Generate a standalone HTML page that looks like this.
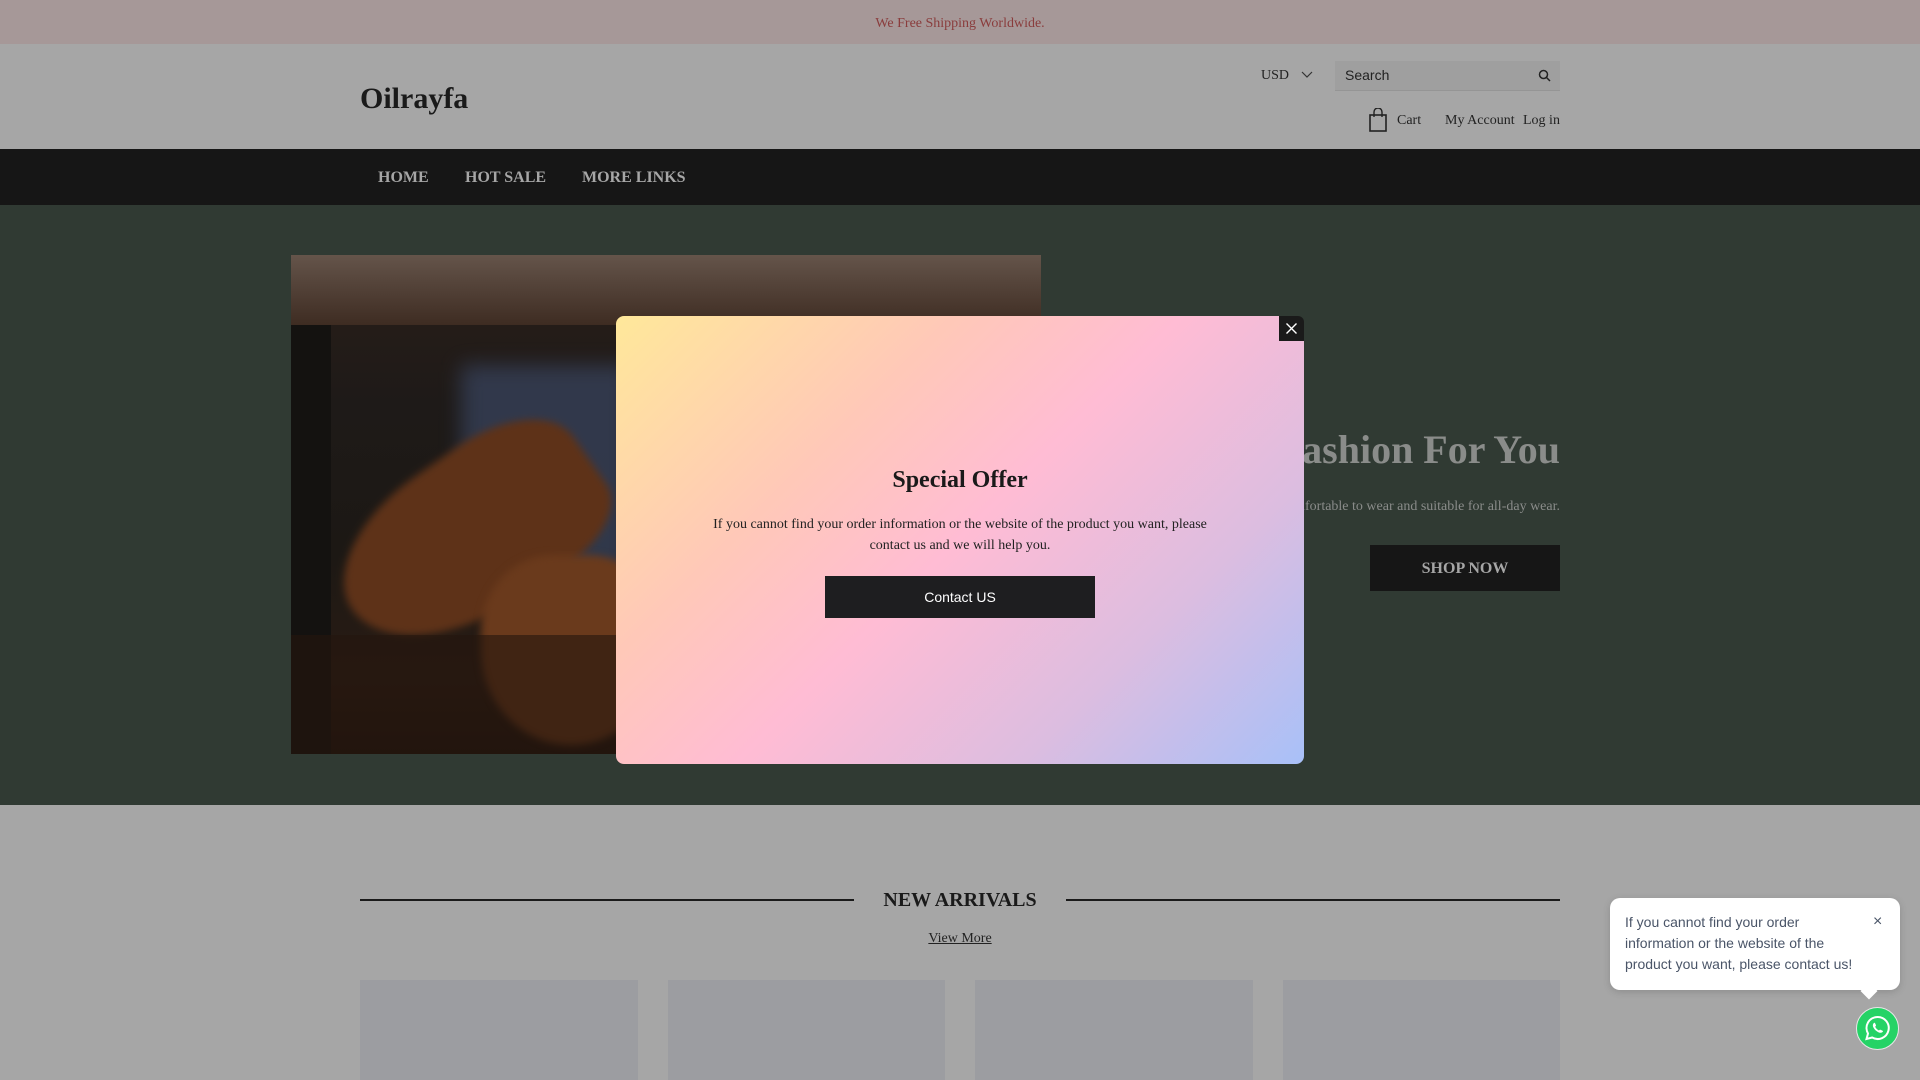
<!DOCTYPE html>
<html><head><meta charset="utf-8"><style>
*{margin:0;padding:0;box-sizing:border-box}
body{width:1920px;height:1080px;overflow:hidden;background:#a6a6a6;font-family:"Liberation Serif",serif;position:relative}
.abs{position:absolute}
</style></head><body>
<div class="abs" style="left:0;top:0;width:1920px;height:44px;background:#a69898;text-align:center;line-height:47px;font-size:14px;color:#8a3c3c">We Free Shipping Worldwide.</div>
<div class="abs" style="left:0;top:44px;width:1920px;height:105px;background:#a6a6a6"></div>
<div class="abs" style="left:360px;top:82px;font-size:30px;font-weight:bold;color:#1a1a1a">Oilrayfa</div>
<div class="abs" style="left:1261px;top:68px;font-size:14px;color:#222">USD <svg width="12" height="8" style="margin-left:8px" viewBox="0 0 12 8"><path d="M1 1l5 5 5-5" fill="none" stroke="#333" stroke-width="1.2"/></svg></div>
<div class="abs" style="left:1335px;top:61px;width:225px;height:30px;background:#9f9f9f;border-bottom:1px solid #959595"></div>
<div class="abs" style="left:1345px;top:67px;font-family:'Liberation Sans',sans-serif;font-size:14px;color:#222">Search</div>
<svg class="abs" style="left:1538px;top:69px" width="13" height="13" viewBox="0 0 13 13"><circle cx="5.5" cy="5.5" r="4" fill="none" stroke="#222" stroke-width="1.5"/><path d="M8.5 8.5l3.5 3.5" stroke="#222" stroke-width="1.5"/></svg>
<svg class="abs" style="left:1368px;top:108px" width="20" height="24" viewBox="0 0 20 24"><rect x="2" y="7" width="16" height="16" fill="none" stroke="#222" stroke-width="1.6"/><path d="M6 9V4a4 4 0 0 1 8 0v5" fill="none" stroke="#222" stroke-width="1.4"/></svg>
<div class="abs" style="left:1397px;top:113px;font-size:14px;color:#222">Cart</div>
<div class="abs" style="left:1445px;top:113px;font-size:14px;color:#222">My Account</div>
<div class="abs" style="left:1523px;top:113px;font-size:14px;color:#222">Log in</div>
<div class="abs" style="left:0;top:149px;width:1920px;height:56px;background:#161616"></div>
<div class="abs" style="left:378px;top:169px;font-size:16px;font-weight:bold;color:#a6a6a6">HOME</div>
<div class="abs" style="left:465px;top:169px;font-size:16px;font-weight:bold;color:#a6a6a6">HOT SALE</div>
<div class="abs" style="left:582px;top:169px;font-size:16px;font-weight:bold;color:#a6a6a6">MORE LINKS</div>
<div class="abs" style="left:0;top:205px;width:1920px;height:600px;background:#303a33"></div>
<div class="abs" style="left:291px;top:255px;width:750px;height:499px;overflow:hidden;background:linear-gradient(180deg,#2a1e18 0%,#1e1a18 30%,#1c1814 60%,#2a1c14 85%,#20140e 100%)">
 <div class="abs" style="left:-10px;top:-10px;width:770px;height:80px;background:linear-gradient(180deg,#6a5a50,#3e2c22)"></div>
 <div class="abs" style="left:0;top:70px;width:40px;height:430px;background:#141210"></div>
 <div class="abs" style="left:170px;top:110px;width:170px;height:230px;background:#364058;filter:blur(10px);opacity:.8"></div>
 <div class="abs" style="left:40px;top:200px;width:280px;height:160px;background:#5e3218;border-radius:50% 40% 30% 60%;transform:rotate(-35deg);filter:blur(4px)"></div>
 <div class="abs" style="left:190px;top:300px;width:180px;height:190px;background:#6a3a1c;border-radius:40% 40% 50% 50%;filter:blur(4px)"></div>
 <div class="abs" style="left:0;top:380px;width:750px;height:120px;background:#24160e;opacity:.6"></div>
</div>
<div class="abs" style="right:360px;top:426px;font-size:40px;font-weight:bold;color:#8a8c8a">Fashion For You</div>
<div class="abs" style="right:360px;top:499px;font-size:14px;color:#8a8c8a">Comfortable to wear and suitable for all-day wear.</div>
<div class="abs" style="left:1370px;top:545px;width:190px;height:46px;background:#161616;color:#a6a6a6;font-size:16px;font-weight:bold;text-align:center;line-height:48px">SHOP NOW</div>
<div class="abs" style="left:360px;top:899px;width:494px;height:2px;background:#1a1a1a"></div>
<div class="abs" style="left:1066px;top:899px;width:494px;height:2px;background:#1a1a1a"></div>
<div class="abs" style="left:0;top:889px;width:1920px;text-align:center;font-size:20px;font-weight:bold;color:#1a1a1a">NEW ARRIVALS</div>
<div class="abs" style="left:0;top:931px;width:1920px;text-align:center;font-size:14px;color:#222;text-decoration:underline">View More</div>
<div class="abs" style="left:360px;top:980px;width:278px;height:100px;background:#9c9da1"></div>
<div class="abs" style="left:668px;top:980px;width:277px;height:100px;background:#9c9da1"></div>
<div class="abs" style="left:975px;top:980px;width:278px;height:100px;background:#9c9da1"></div>
<div class="abs" style="left:1283px;top:980px;width:277px;height:100px;background:#9c9da1"></div>
<div class="abs" style="left:616px;top:316px;width:688px;height:448px;border-radius:8px;background:linear-gradient(135deg,#ffe89a 0%,#ffc8b8 30%,#ffbcd4 50%,#dcbde0 75%,#a8c0f8 100%)"></div>
<div class="abs" style="left:1279px;top:316px;width:25px;height:25px;background:#1a1a1a;border-top-right-radius:6px"><svg width="25" height="25" viewBox="0 0 25 25"><path d="M7.5 7.5l10 10M17.5 7.5l-10 10" stroke="#fff" stroke-width="1.4"/></svg></div>
<div class="abs" style="left:616px;top:467px;width:688px;text-align:center;font-size:24px;font-weight:bold;color:#1a1a1a">Special Offer</div>
<div class="abs" style="left:700px;top:514px;width:520px;text-align:center;font-size:14px;line-height:21px;color:#222">If you cannot find your order information or the website of the product you want, please contact us and we will help you.</div>
<div class="abs" style="left:825px;top:576px;width:270px;height:42px;background:#1e1e20;color:#fff;font-family:'Liberation Sans',sans-serif;font-size:14px;text-align:center;line-height:42px">Contact US</div>
<div class="abs" style="left:1610px;top:898px;width:290px;height:92px;background:#fff;border-radius:10px;box-shadow:0 2px 8px rgba(0,0,0,.15)"></div>
<div class="abs" style="left:1863px;top:985px;width:12px;height:12px;background:#fff;transform:rotate(45deg)"></div>
<div class="abs" style="left:1625px;top:912px;width:240px;font-family:'Liberation Sans',sans-serif;font-size:14px;line-height:21px;color:#4a5568">If you cannot find your order information or the website of the product you want, please contact us!</div>
<div class="abs" style="left:1873px;top:913px;font-family:'Liberation Sans',sans-serif;font-size:16px;color:#4a5568">×</div>
<div class="abs" style="left:1856px;top:1007px;width:43px;height:43px;border-radius:50%;background:#25d366;border:1px solid #e8e8e8"><svg width="41" height="41" viewBox="0 0 41 41"><path d="M20.5 9a11 11 0 0 0-9.5 16.5L9.5 31l5.7-1.5A11 11 0 1 0 20.5 9z" fill="none" stroke="#fff" stroke-width="2"/><path d="M16.5 15.5c.5-1 1.2-1 1.6-.2l.9 2c.2.5-.5 1.1-.8 1.5.7 1.6 2 2.9 3.7 3.7.4-.3 1-1 1.5-.8l2 .9c.8.4.8 1.1-.2 1.7-1 .8-2.6.6-4.3-.3-2-1-3.7-2.8-4.6-4.7-.6-1.4-.6-2.9.2-3.8z" fill="#fff"/></svg></div>
</body></html>
